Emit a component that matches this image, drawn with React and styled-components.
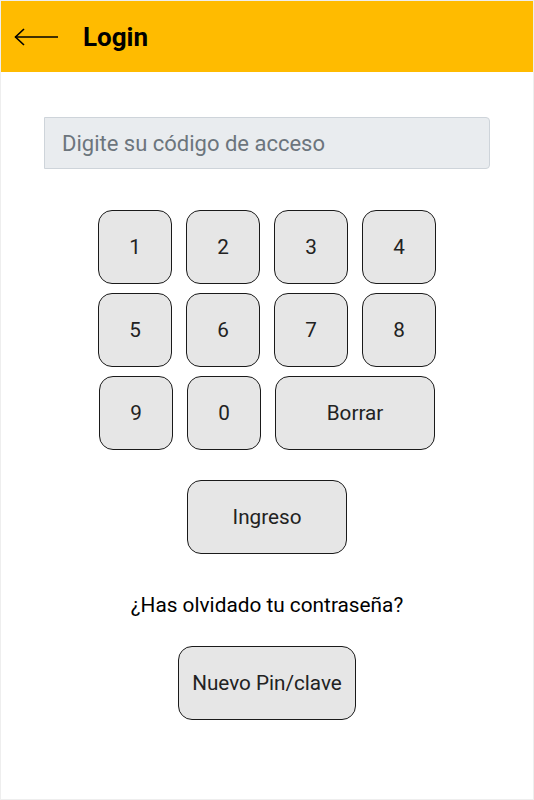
import React from 'react'
import styled, { createGlobalStyle } from 'styled-components'

const Global = createGlobalStyle`
  html, body {
    margin: 0;
    padding: 0;
    background: #fff;
  }
  * {
    box-sizing: border-box;
  }
`

const Page = styled.div`
  width: 534px;
  height: 800px;
  border: 1px solid #eeeeee;
  font-family: Roboto, "Liberation Sans", sans-serif;
  color: #222;
  display: flex;
  flex-direction: column;
  align-items: center;
`

const Header = styled.header`
  align-self: stretch;
  height: 71px;
  background: #ffbb00;
  display: flex;
  align-items: center;
  padding-left: 13px;
  gap: 25px;
`

const Title = styled.h1`
  margin: 0;
  font-size: 26px;
  font-weight: 700;
  color: #000;
  line-height: 1;
`

const CodeInput = styled.input`
  margin-top: 45px;
  width: 446px;
  height: 52px;
  background: #e9ecef;
  border: 1px solid #ced4da;
  border-radius: 0 4px 4px 0;
  padding: 0 17px;
  font-family: inherit;
  font-size: 22px;
  color: #495057;
  outline: none;

  &::placeholder {
    color: #6c757d;
  }
`

const Keypad = styled.div`
  margin-top: 41px;
  display: flex;
  flex-direction: column;
  align-items: center;
  gap: 9px;
`

const Row = styled.div`
  display: flex;
  gap: 14px;
`

const Key = styled.button`
  width: ${p => p.$w || 74}px;
  height: 74px;
  border: 1.5px solid #1a1a1a;
  border-radius: 14px;
  background: #e6e6e6;
  font-family: inherit;
  font-size: 20.7px;
  color: #222;
  cursor: pointer;
  padding: 0;
`

const Question = styled.p`
  margin: 39px 0 0;
  font-size: 20.8px;
  color: #000;
  line-height: 1.2;
`

const BackArrow = () => (
  <svg width="44" height="20" viewBox="0 0 44 20" fill="none" stroke="#000" strokeWidth="1.6">
    <path d="M1 10 H44" />
    <path d="M10 2 L1.5 10 L10 18" />
  </svg>
)

const digits = [['1', '2', '3', '4'], ['5', '6', '7', '8']]

export default function App() {
  return (
    <>
      <Global />
      <Page>
        <Header>
          <BackArrow />
          <Title>Login</Title>
        </Header>
        <CodeInput placeholder="Digite su código de acceso" />
        <Keypad>
          {digits.map((row, i) => (
            <Row key={i}>
              {row.map(d => <Key key={d}>{d}</Key>)}
            </Row>
          ))}
          <Row>
            <Key>9</Key>
            <Key>0</Key>
            <Key $w={160}>Borrar</Key>
          </Row>
        </Keypad>
        <Key $w={160} style={{ marginTop: 30 }}>Ingreso</Key>
        <Question>¿Has olvidado tu contraseña?</Question>
        <Key $w={178} style={{ marginTop: 28 }}>Nuevo Pin/clave</Key>
      </Page>
    </>
  )
}
